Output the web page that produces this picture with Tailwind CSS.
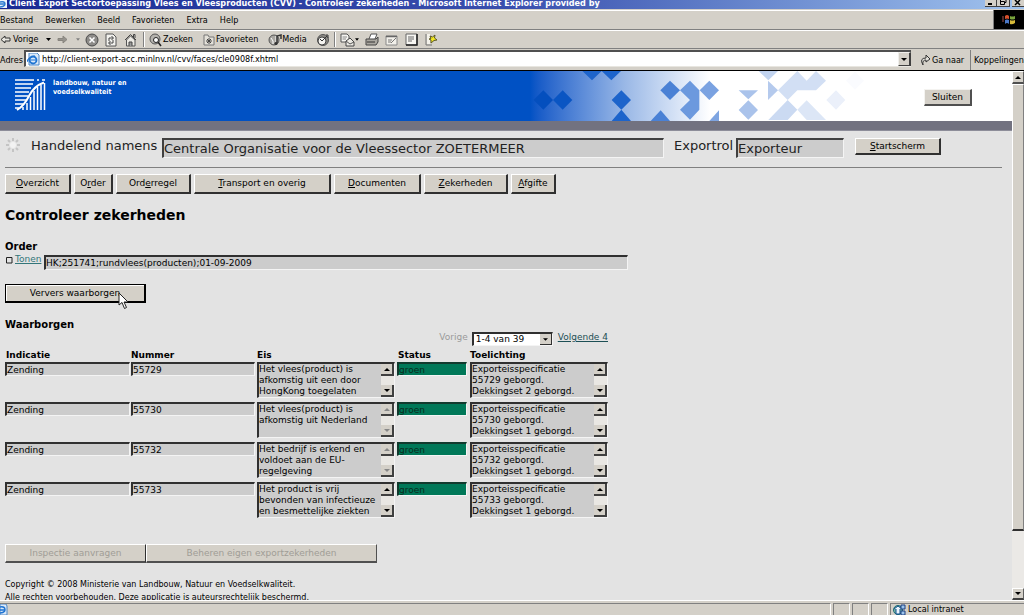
<!DOCTYPE html>
<html lang="nl">
<head>
<meta charset="utf-8">
<title>Client Export - Controleer zekerheden</title>
<script src="https://cdn.jsdelivr.net/npm/@tailwindcss/browser@4"></script>
</head>
<body class="h-screen flex flex-col overflow-hidden bg-[#d4d0c8] text-black text-[9px] leading-[11px] font-['DejaVu_Sans_Condensed','DejaVu_Sans',sans-serif]">

<!-- Title bar -->
<header class="flex-none h-[9px] flex items-end justify-between overflow-hidden bg-linear-to-r from-[#1a2a94] via-[#3a4fae] via-50% to-[#a2c4ee]">
  <div class="flex items-end gap-[2px] whitespace-nowrap text-white font-bold text-[9px] leading-[11px]">
    <svg class="w-[7px] h-[9px]" viewBox="0 0 7 9"><path d="M0 0H7V8H0Z" fill="#eef4fb"/><path d="M0 2Q5 1 5 4H0M0 7Q3 7 5 5" fill="none" stroke="#2c7bd0" stroke-width="1.4"/></svg>
    <span>Client Export Sectortoepassing Vlees en Vleesproducten (CVV) - Controleer zekerheden - Microsoft Internet Explorer provided by</span>
  </div>
  <div class="flex-none flex h-[7px] mb-[2px]">
    <button aria-label="Minimaliseren" class="w-[12px] h-[7px] bg-[#d4d0c8] border-r border-b border-[#404040]"><svg class="w-[11px] h-[6px]" viewBox="0 0 11 6"><path d="M3 4H7" stroke="#000" stroke-width="2"/></svg></button>
    <button aria-label="Herstellen" class="w-[13px] h-[7px] bg-[#d4d0c8] border-r border-b border-[#404040]"><svg class="w-[12px] h-[6px]" viewBox="0 0 12 6"><path d="M3.500 0V4.500H7.500V1.500H3.500M9 0V2.500H8" fill="none" stroke="#000"/></svg></button>
    <button aria-label="Sluiten" class="w-[12px] h-[7px] ml-[2px] bg-[#d4d0c8] border-b border-[#404040]"><svg class="w-[12px] h-[6px]" viewBox="0 0 12 6"><path d="M3 5L8 0M3 0L8 5" stroke="#000" stroke-width="1.500"/></svg></button>
  </div>
</header>

<!-- Menu bar -->
<div class="flex-none flex h-[21px] pt-px border-b border-[#808080]">
  <nav class="flex-1 flex items-center gap-[12px] border-t border-white">
    <button>Bestand</button><button>Bewerken</button><button>Beeld</button><button>Favorieten</button><button>Extra</button><button>Help</button>
  </nav>
  <div class="w-[31px] border-l border-[#808080] bg-black flex items-center justify-center">
    <svg class="w-[14px] h-[12px]" viewBox="0 0 14 12"><path d="M3 2Q5 0 7 2V5Q5 4 3 5Z" fill="#d8502c"/><path d="M8 2Q10 3 13 2V5Q10 6 8 5Z" fill="#79a53c"/><path d="M3 6Q5 5 7 6V10Q5 8 3 10Z" fill="#4b78c8"/><path d="M8 6Q10 7 13 6V9Q10 11 8 10Z" fill="#d8bb3a"/><path d="M0 3H2M0 5H2M0 7H2" stroke="#a05050"/></svg>
  </div>
</div>

<!-- Toolbar -->
<div class="flex-none flex items-center h-[19px] border-t border-white border-b border-b-[#808080]">
  <button class="flex items-center gap-[2px] w-[52px]"><svg class="w-[11px] h-[9px]" viewBox="0 0 11 9"><path d="M5 1L1 4.500L5 8V6H10V3H5Z" fill="#e8e6e0" stroke="#333"/></svg>Vorige<svg class="ml-[5px] w-[5px] h-[3px]" viewBox="0 0 5 3"><path d="M0 0H5L2.500 3Z"/></svg></button>
  <button aria-label="Volgende" class="flex items-center gap-[8px] ml-[5px]"><svg class="w-[11px] h-[9px]" viewBox="0 0 11 9"><path d="M6 1L10 4.500L6 8V5.500H1V3.500H6Z" fill="#96938d" stroke="#88857f"/></svg><svg class="w-[4px] h-[3px]" viewBox="0 0 5 3"><path d="M0 0H5L2.500 3Z" fill="#808080"/></svg></button>
  <button aria-label="Stoppen" class="ml-[5px]"><svg class="block w-[14px] h-[14px]" viewBox="0 0 14 14"><circle cx="7" cy="7" r="6" fill="#8d8b88" stroke="#4a4a4a"/><path d="M4.500 4.500L9.500 9.500M9.500 4.500L4.500 9.500" stroke="#fff" stroke-width="1.500"/></svg></button>
  <button aria-label="Vernieuwen" class="ml-[6px]"><svg class="block w-[12px] h-[14px]" viewBox="0 0 12 14"><path d="M1 1H8L11 4V13H1Z" fill="#f3f2ee" stroke="#555"/><path d="M4 8V5H8M6.500 3L8.500 5L6.500 7M8 7V10H4M5.500 8L3.500 10L5.500 12" fill="none" stroke="#444"/></svg></button>
  <button aria-label="Startpagina" class="ml-[7px]"><svg class="block w-[13px] h-[14px]" viewBox="0 0 13 14"><path d="M1 7L6.500 1.500L12 7M9.500 4V1.500H11V5" fill="none" stroke="#444"/><path d="M2.500 7V13H11V7L6.500 3Z" fill="#eceae4" stroke="#555"/><path d="M5 13V9H8V13" fill="#999" stroke="#444"/></svg></button>
  <span class="h-[15px] w-[2px] ml-[6px] border-l border-[#808080] bg-white"></span>
  <button class="flex items-center gap-px ml-[4px]"><svg class="w-[13px] h-[14px]" viewBox="0 0 13 14"><circle cx="6" cy="6" r="5" fill="#b5b3ae" stroke="#555"/><circle cx="7" cy="7" r="2.500" fill="#fff" stroke="#222"/><path d="M9 9L12 13" stroke="#222" stroke-width="1.500"/></svg>Zoeken</button>
  <button class="flex items-center gap-px ml-[10px]"><svg class="w-[12px] h-[12px]" viewBox="0 0 12 12"><path d="M1 3V1H5L6 3H11V11H1Z" fill="#e4e1d9" stroke="#777"/><path d="M6 4V10M3 7H9M4 5L8 9M8 5L4 9" stroke="#444"/></svg>Favorieten</button>
  <button class="flex items-center ml-[10px]"><svg class="w-[14px] h-[14px]" viewBox="0 0 14 14"><circle cx="6" cy="7" r="5" fill="#a9a7a2" stroke="#555"/><path d="M3 5Q6 8 5 11M8 3V9" stroke="#fff" fill="none"/><path d="M9 10V3L13 2V6" fill="none" stroke="#333" stroke-width="1.500"/><circle cx="8" cy="10.500" r="1.600" fill="#333"/></svg>Media</button>
  <button aria-label="Geschiedenis" class="ml-[9px]"><svg class="block w-[14px] h-[14px]" viewBox="0 0 14 14"><circle cx="7" cy="7" r="5.500" fill="#8b8984" stroke="#555"/><circle cx="6" cy="8" r="4" fill="#f4f3f0" stroke="#444"/><path d="M6 8L11 3M6 8L4 6M10 2H12V5" stroke="#333" fill="none"/></svg></button>
  <span class="h-[15px] w-[2px] ml-[4px] border-l border-[#808080] bg-white"></span>
  <button aria-label="E-mail" class="flex items-center ml-[4px]"><svg class="w-[15px] h-[14px]" viewBox="0 0 15 14"><path d="M1 1H7L9 3V9H1Z" fill="#f5f4f0" stroke="#555"/><path d="M2.500 4H7M2.500 6H6" stroke="#888"/><path d="M6 8L10 5L14 9V13H6Z" fill="#eceae4" stroke="#444"/><path d="M6 8L10 11L14 9" fill="none" stroke="#555"/></svg><svg class="w-[4px] h-[3px]" viewBox="0 0 5 3"><path d="M0 0H5L2.500 3Z"/></svg></button>
  <button aria-label="Afdrukken" class="ml-[6px]"><svg class="block w-[14px] h-[13px]" viewBox="0 0 14 13"><path d="M4 6L6 1H12L10 6" fill="#fff" stroke="#555"/><path d="M1 6H11L13 4V9L11 12H1Z" fill="#aaa7a0" stroke="#444"/><path d="M2 9H10" stroke="#333"/></svg></button>
  <button aria-label="Bewerken" class="ml-[6px]"><svg class="block w-[13px] h-[12px]" viewBox="0 0 13 12"><path d="M1 2H12V11H1Z" fill="#f2f0ea" stroke="#888"/><path d="M1 2.500H12" stroke="#666" stroke-width="1.500"/><path d="M3 6H7M3 8H6M6 9L11 4" stroke="#777"/></svg></button>
  <button aria-label="Discussie" class="ml-[7px]"><svg class="block w-[13px] h-[13px]" viewBox="0 0 13 13"><path d="M1 1H12V12H1Z" fill="#f7f6f2" stroke="#666"/><path d="M12 1V12H1" fill="none" stroke="#222" stroke-width="1.500"/><path d="M3 4H9M3 6H9M3 8H7" stroke="#666"/></svg></button>
  <button aria-label="Messenger" class="ml-[7px]"><svg class="block w-[12px] h-[13px]" viewBox="0 0 12 13"><path d="M1 1V12H7" fill="none" stroke="#777"/><path d="M2 1H5V11H2Z" fill="#f3f1ea"/><path d="M5 3L7.500 4L10 2L9.500 5L12 7L9 7.500L6 10V7L4 6L6 5.500Z" fill="#f4e91f" stroke="#5b5828"/></svg></button>
</div>

<!-- Address bar -->
<div class="flex-none flex items-stretch h-[22px] pt-px border-b border-black">
  <label for="adres" class="w-[24px] flex-none self-center">Adres</label>
  <div class="flex-1 flex items-center mb-[3px] border-t-2 border-l-2 border-[#505050] border-b border-b-[#e8e6e0] bg-white">
    <svg class="flex-none w-[13px] h-[13px] ml-px" viewBox="0 0 13 13"><path d="M2 0H10L12 2V12H2Z" fill="#dbe9f8" stroke="#4c86c6"/><circle cx="6" cy="7" r="3.500" fill="none" stroke="#1f74d2" stroke-width="1.800"/><path d="M3 7H9M0 9Q1 4 8 3" stroke="#1f74d2" fill="none" stroke-width="1.200"/></svg>
    <input id="adres" class="flex-1 min-w-0 ml-[2px] h-[14px] bg-transparent outline-none" value="http://client-export-acc.minlnv.nl/cvv/faces/cle0908f.xhtml">
    <button aria-label="Adressen tonen" class="flex-none w-[13px] self-stretch flex items-center justify-center bg-[#d4d0c8] border-t border-l border-[#f0efec] border-r-2 border-b border-r-[#404040] border-b-[#404040]"><svg class="w-[6px] h-[3px]" viewBox="0 0 6 3"><path d="M0 0H6L3 3Z"/></svg></button>
  </div>
  <button class="flex-none flex items-center gap-px w-[59px] pl-[9px]"><svg class="w-[11px] h-[12px]" viewBox="0 0 11 12"><path d="M3 11Q-1 4 6 4V1L10 5L6 8V6Q2 6 3 11Z" fill="#e2e0da" stroke="#333"/></svg>Ga naar</button>
  <button class="flex-none w-[54px] border-l border-[#808080] text-left pl-[3px]">Koppelingen</button>
</div>

<!-- Browser viewport -->
<div class="flex-1 min-h-0 flex">
  <main class="flex-1 min-w-0 overflow-hidden bg-[#e3e3e3] font-['DejaVu_Sans',sans-serif]">
    <!-- Ministry banner -->
    <div class="flex h-[50px] bg-linear-to-r from-[#0051c4] from-[530px] via-[#9ab8e6] via-[625px] to-white to-[710px]">
      <div class="flex-none w-[520px] flex gap-[7px] pl-[15px] pt-[8px] text-white">
        <svg class="w-[31px] h-[32px]" viewBox="0 0 31 32"><g stroke="#fff" stroke-width="1.500"><path d="M0 1H19M0 5H18M0 9H16M0 13H14M0 17H13M0 21H11M0 25H8M0 29H4M22 1H24M27 1H30"/><path d="M8 31V28M12 31V24M15.500 31V18M19 31V12M22.500 31V8M26 31V6M29.500 31V4"/></g><path d="M2 31Q9 27 14 17T29 3.500" fill="none" stroke="#fff" stroke-width="2"/></svg>
        <p class="font-bold text-[7px] leading-[9px] font-['DejaVu_Sans_Condensed','DejaVu_Sans',sans-serif]">landbouw, natuur en<br>voedselkwaliteit</p>
      </div>
      <svg class="flex-none w-[350px] h-[50px]" viewBox="0 18 1050 150">
        <path d="M70 76L99 105L70 134L41 105Z" fill="#044fbe"/>
        <path d="M128 76L157 105L128 134L99 105Z" fill="#0a55c3"/>
        <path d="M187 18H245L216 46ZM245 18H303L274 46ZM304 76L333 105L304 134L275 105ZM304 134L333 168H275Z" fill="#1d64cb"/>
        <path d="M450 47L480 76L450 105L421 76Z" fill="#4a81d5"/>
        <path d="M510 47L538 76V134L510 164L480 134L510 105L480 76Z" fill="#6c99de"/>
        <path d="M568 47L597 76L568 105L539 76Z" fill="#7aa2e1"/>
        <path d="M422 136L450 168H392Z" fill="#4a81d5"/>
        <path d="M597 136V168H568Z" fill="#7fa5e1"/>
        <path d="M656 76H714L685 103ZM685 106L714 135L685 164L656 135Z" fill="#aac3eb"/>
        <path d="M716 18H774L745 46Z" fill="#c2d4f0"/><path d="M744 47L774 76L744 105Z" fill="#b5caed"/>
        <path d="M774 76L832 18L860 47L888 18L918 47L888 76H832L803 105Z" fill="#d2dff4"/>
        <path d="M803 105L832 134L803 165H745Z" fill="#cbdaf2"/>
        <path d="M860 106L918 165H860L832 134Z" fill="#dce6f6"/>
        <path d="M948 76L976 105L948 134L919 105Z" fill="#ebf0fa"/>
        <path d="M1005 20L1032 47L1005 74L978 47Z" fill="#fafbfe"/>
      </svg>
      <div class="flex-1 flex items-center justify-end pr-[40px] pt-[3px]">
        <button class="w-[48px] h-[17px] bg-[#d4d0c8] border border-[#f4f3f0] border-r-2 border-b-2 border-r-[#505050] border-b-[#505050]">Sluiten</button>
      </div>
    </div>
    <div class="h-[10px] bg-[#727280] border-b border-[#8d8d99]"></div>

    <form class="pl-[5px]">
      <!-- Acting party -->
      <div class="flex items-start pt-[7px] h-[37px] mr-[10px] border-b border-[#808080] text-[13px] text-[#222]">
        <svg class="w-[14px] h-[14px] ml-px mr-[11px]" viewBox="0 0 14 14"><g stroke="#c4c4c4" stroke-width="2"><path d="M7 0V3M7 11V14M0 7H3M11 7H14M2 2L4 4M10 10L12 12M2 12L4 10M10 4L12 2"/></g><circle cx="7" cy="7" r="3" fill="#f2f2f2"/></svg>
        <label for="namens" class="w-[131px] leading-[15px]">Handelend namens</label>
        <input id="namens" readonly class="w-[502px] h-[20px] bg-[#cccccc] border border-[#f4f4f4] border-t-2 border-l-2 border-t-[#404040] border-l-[#404040]" value="Centrale Organisatie voor de Vleessector ZOETERMEER">
        <label for="rol" class="w-[62px] ml-[10px] leading-[15px]">Exportrol</label>
        <input id="rol" readonly class="w-[108px] h-[20px] bg-[#cccccc] border border-[#f4f4f4] border-t-2 border-l-2 border-t-[#404040] border-l-[#404040]" value="Exporteur">
        <button type="button" class="w-[86px] h-[17px] ml-[11px] text-[9px] text-black bg-[#d4d0c8] border border-white border-r-2 border-b-2 border-r-[#303030] border-b-[#303030]"><u>S</u>tartscherm</button>
      </div>

      <!-- Section buttons -->
      <div class="flex gap-[3px] mt-[6px] h-[20px]">
        <button type="button" class="w-[66px] bg-[#d4d0c8] border border-white border-r-2 border-b-2 border-r-[#303030] border-b-[#303030]"><u>O</u>verzicht</button>
        <button type="button" class="w-[39px] bg-[#d4d0c8] border border-white border-r-2 border-b-2 border-r-[#303030] border-b-[#303030]">O<u>r</u>der</button>
        <button type="button" class="w-[75px] bg-[#d4d0c8] border border-white border-r-2 border-b-2 border-r-[#303030] border-b-[#303030]">Ord<u>e</u>rregel</button>
        <button type="button" class="w-[137px] bg-[#d4d0c8] border border-white border-r-2 border-b-2 border-r-[#303030] border-b-[#303030]"><u>T</u>ransport en overig</button>
        <button type="button" class="w-[87px] bg-[#d4d0c8] border border-white border-r-2 border-b-2 border-r-[#303030] border-b-[#303030]"><u>D</u>ocumenten</button>
        <button type="button" class="w-[84px] bg-[#d4d0c8] border border-white border-r-2 border-b-2 border-r-[#303030] border-b-[#303030]"><u>Z</u>ekerheden</button>
        <button type="button" class="w-[45px] bg-[#d4d0c8] border border-white border-r-2 border-b-2 border-r-[#303030] border-b-[#303030]"><u>A</u>fgifte</button>
      </div>

      <h1 class="mt-[12px] text-[14px] leading-[18px] font-bold">Controleer zekerheden</h1>

      <h2 class="mt-[16px] text-[10px] leading-[14px] font-bold">Order</h2>
      <div class="flex items-start">
        <a href="#" class="w-[39px] flex items-center gap-[2px] text-[#33767a]"><svg class="w-[8px] h-[8px]" viewBox="0 0 8 8"><path d="M1.500 1.500H7V7H1.500Z" fill="none" stroke="#222"/></svg><span class="underline">Tonen</span></a>
        <input aria-label="Order" readonly class="w-[584px] h-[15px] mt-px bg-[#cccccc] border border-[#f4f4f4] border-t-2 border-l-2 border-t-[#303030] border-l-[#303030]" value="HK;251741;rundvlees(producten);01-09-2009">
      </div>

      <div class="relative w-[141px] mt-[14px]">
        <button type="button" class="w-full h-[19px] bg-[#d4d0c8] border border-black border-r-2 border-b-2 shadow-[inset_1px_1px_0_#fff]">Ververs waarborgen</button>
        <svg class="absolute left-[113px] top-[8px] w-[11px] h-[18px]" viewBox="0 0 11 18"><path d="M1 1V13L4 10.500L6.500 16.500L8.500 15.500L6 10H10Z" fill="#fff" stroke="#222"/></svg>
      </div>

      <h2 class="mt-[15px] text-[10px] leading-[14px] font-bold">Waarborgen</h2>
      <div class="flex items-start w-[603px] justify-end">
        <span class="text-[#9a9a9a] mr-[4px]">Vorige</span>
        <div class="relative w-[81px]">
          <select aria-label="Pagina" class="block appearance-none w-full h-[14px] pl-[2px] bg-white border border-[#f4f4f4] border-t-2 border-l-2 border-t-[#303030] border-l-[#303030]"><option>1-4 van 39</option></select>
          <span class="absolute right-px top-[2px] w-[12px] h-[11px] pointer-events-none flex items-center justify-center bg-[#d4d0c8] border-r border-b border-[#303030]"><svg class="w-[5px] h-[3px]" viewBox="0 0 6 3"><path d="M0 0H6L3 3Z"/></svg></span>
        </div>
        <a href="#" class="ml-[5px] underline text-[#1d4f55]">Volgende 4</a>
      </div>

      <table class="mt-[2px] w-[603px] table-fixed border-collapse text-left">
        <thead>
          <tr class="h-[14px]"><th class="w-[126px] pl-px">Indicatie</th><th class="w-[126px]">Nummer</th><th class="w-[140px]">Eis</th><th class="w-[73px] pl-px">Status</th><th class="w-[138px]">Toelichting</th></tr>
        </thead>
        <tbody class="align-top">
          <tr class="h-[40px]">
            <td class="pr-px"><input aria-label="Indicatie" readonly class="block w-full h-[14px] bg-[#cccccc] border border-[#f4f4f4] border-t-2 border-l-2 border-t-[#303030] border-l-[#303030]" value="Zending"></td>
            <td class="pr-[2px]"><input aria-label="Nummer" readonly class="block w-full h-[14px] bg-[#cccccc] border border-[#f4f4f4] border-t-2 border-l-2 border-t-[#303030] border-l-[#303030]" value="55729"></td>
            <td class="pr-[2px]"><div class="flex border border-[#f4f4f4] border-t-2 border-l-2 border-t-[#303030] border-l-[#303030] bg-[#cccccc]"><textarea aria-label="Eis" readonly class="block flex-1 min-w-0 h-[33px] resize-none overflow-hidden whitespace-pre">Het vlees(product) is
afkomstig uit een door
HongKong toegelaten</textarea>
              <div class="w-[13px] flex flex-col justify-between bg-[#e9e7e3]"><button type="button" aria-label="Omhoog" class="h-[12px] flex items-center justify-center bg-[#d4d0c8] border-r-2 border-b-2 border-[#404040]"><svg class="w-[6px] h-[3px]" viewBox="0 0 6 3"><path d="M0 3H6L3 0Z"/></svg></button><button type="button" aria-label="Omlaag" class="h-[12px] flex items-center justify-center bg-[#d4d0c8] border-r-2 border-b-2 border-[#404040]"><svg class="w-[6px] h-[3px]" viewBox="0 0 6 3"><path d="M0 0H6L3 3Z"/></svg></button></div></div></td>
            <td class="pr-[3px]"><input aria-label="Status" readonly class="block w-full h-[14px] bg-[#007858] text-[#0a2a1c] border border-[#f4f4f4] border-t-2 border-l-2 border-t-[#123a2e] border-l-[#123a2e]" value="groen"></td>
            <td><div class="flex border border-[#f4f4f4] border-t-2 border-l-2 border-t-[#303030] border-l-[#303030] bg-[#cccccc]"><textarea aria-label="Toelichting" readonly class="block flex-1 min-w-0 h-[33px] resize-none overflow-hidden whitespace-pre">Exporteisspecificatie
55729 geborgd.
Dekkingset 2 geborgd.</textarea>
              <div class="w-[13px] flex flex-col justify-between bg-[#e9e7e3]"><button type="button" aria-label="Omhoog" class="h-[12px] flex items-center justify-center bg-[#d4d0c8] border-r-2 border-b-2 border-[#404040]"><svg class="w-[6px] h-[3px]" viewBox="0 0 6 3"><path d="M0 3H6L3 0Z"/></svg></button><button type="button" aria-label="Omlaag" class="h-[12px] flex items-center justify-center bg-[#d4d0c8] border-r-2 border-b-2 border-[#404040]"><svg class="w-[6px] h-[3px]" viewBox="0 0 6 3"><path d="M0 0H6L3 3Z"/></svg></button></div></div></td>
          </tr>
          <tr class="h-[40px]">
            <td class="pr-px"><input aria-label="Indicatie" readonly class="block w-full h-[14px] bg-[#cccccc] border border-[#f4f4f4] border-t-2 border-l-2 border-t-[#303030] border-l-[#303030]" value="Zending"></td>
            <td class="pr-[2px]"><input aria-label="Nummer" readonly class="block w-full h-[14px] bg-[#cccccc] border border-[#f4f4f4] border-t-2 border-l-2 border-t-[#303030] border-l-[#303030]" value="55730"></td>
            <td class="pr-[2px]"><div class="flex border border-[#f4f4f4] border-t-2 border-l-2 border-t-[#303030] border-l-[#303030] bg-[#cccccc]"><textarea aria-label="Eis" readonly class="block flex-1 min-w-0 h-[33px] resize-none overflow-hidden whitespace-pre">Het vlees(product) is
afkomstig uit Nederland</textarea>
              <div class="w-[13px] flex flex-col justify-between bg-[#e9e7e3]"><button type="button" disabled aria-label="Omhoog" class="h-[12px] flex items-center justify-center bg-[#d4d0c8] border-r-2 border-b-2 border-[#404040]"><svg class="w-[6px] h-[3px]" viewBox="0 0 6 3"><path d="M0 3H6L3 0Z" fill="#888"/></svg></button><button type="button" disabled aria-label="Omlaag" class="h-[12px] flex items-center justify-center bg-[#d4d0c8] border-r-2 border-b-2 border-[#404040]"><svg class="w-[6px] h-[3px]" viewBox="0 0 6 3"><path d="M0 0H6L3 3Z" fill="#888"/></svg></button></div></div></td>
            <td class="pr-[3px]"><input aria-label="Status" readonly class="block w-full h-[14px] bg-[#007858] text-[#0a2a1c] border border-[#f4f4f4] border-t-2 border-l-2 border-t-[#123a2e] border-l-[#123a2e]" value="groen"></td>
            <td><div class="flex border border-[#f4f4f4] border-t-2 border-l-2 border-t-[#303030] border-l-[#303030] bg-[#cccccc]"><textarea aria-label="Toelichting" readonly class="block flex-1 min-w-0 h-[33px] resize-none overflow-hidden whitespace-pre">Exporteisspecificatie
55730 geborgd.
Dekkingset 1 geborgd.</textarea>
              <div class="w-[13px] flex flex-col justify-between bg-[#e9e7e3]"><button type="button" aria-label="Omhoog" class="h-[12px] flex items-center justify-center bg-[#d4d0c8] border-r-2 border-b-2 border-[#404040]"><svg class="w-[6px] h-[3px]" viewBox="0 0 6 3"><path d="M0 3H6L3 0Z"/></svg></button><button type="button" aria-label="Omlaag" class="h-[12px] flex items-center justify-center bg-[#d4d0c8] border-r-2 border-b-2 border-[#404040]"><svg class="w-[6px] h-[3px]" viewBox="0 0 6 3"><path d="M0 0H6L3 3Z"/></svg></button></div></div></td>
          </tr>
          <tr class="h-[40px]">
            <td class="pr-px"><input aria-label="Indicatie" readonly class="block w-full h-[14px] bg-[#cccccc] border border-[#f4f4f4] border-t-2 border-l-2 border-t-[#303030] border-l-[#303030]" value="Zending"></td>
            <td class="pr-[2px]"><input aria-label="Nummer" readonly class="block w-full h-[14px] bg-[#cccccc] border border-[#f4f4f4] border-t-2 border-l-2 border-t-[#303030] border-l-[#303030]" value="55732"></td>
            <td class="pr-[2px]"><div class="flex border border-[#f4f4f4] border-t-2 border-l-2 border-t-[#303030] border-l-[#303030] bg-[#cccccc]"><textarea aria-label="Eis" readonly class="block flex-1 min-w-0 h-[33px] resize-none overflow-hidden whitespace-pre">Het bedrijf is erkend en
voldoet aan de EU-
regelgeving</textarea>
              <div class="w-[13px] flex flex-col justify-between bg-[#e9e7e3]"><button type="button" disabled aria-label="Omhoog" class="h-[12px] flex items-center justify-center bg-[#d4d0c8] border-r-2 border-b-2 border-[#404040]"><svg class="w-[6px] h-[3px]" viewBox="0 0 6 3"><path d="M0 3H6L3 0Z" fill="#888"/></svg></button><button type="button" disabled aria-label="Omlaag" class="h-[12px] flex items-center justify-center bg-[#d4d0c8] border-r-2 border-b-2 border-[#404040]"><svg class="w-[6px] h-[3px]" viewBox="0 0 6 3"><path d="M0 0H6L3 3Z" fill="#888"/></svg></button></div></div></td>
            <td class="pr-[3px]"><input aria-label="Status" readonly class="block w-full h-[14px] bg-[#007858] text-[#0a2a1c] border border-[#f4f4f4] border-t-2 border-l-2 border-t-[#123a2e] border-l-[#123a2e]" value="groen"></td>
            <td><div class="flex border border-[#f4f4f4] border-t-2 border-l-2 border-t-[#303030] border-l-[#303030] bg-[#cccccc]"><textarea aria-label="Toelichting" readonly class="block flex-1 min-w-0 h-[33px] resize-none overflow-hidden whitespace-pre">Exporteisspecificatie
55732 geborgd.
Dekkingset 1 geborgd.</textarea>
              <div class="w-[13px] flex flex-col justify-between bg-[#e9e7e3]"><button type="button" aria-label="Omhoog" class="h-[12px] flex items-center justify-center bg-[#d4d0c8] border-r-2 border-b-2 border-[#404040]"><svg class="w-[6px] h-[3px]" viewBox="0 0 6 3"><path d="M0 3H6L3 0Z"/></svg></button><button type="button" aria-label="Omlaag" class="h-[12px] flex items-center justify-center bg-[#d4d0c8] border-r-2 border-b-2 border-[#404040]"><svg class="w-[6px] h-[3px]" viewBox="0 0 6 3"><path d="M0 0H6L3 3Z"/></svg></button></div></div></td>
          </tr>
          <tr class="h-[40px]">
            <td class="pr-px"><input aria-label="Indicatie" readonly class="block w-full h-[14px] bg-[#cccccc] border border-[#f4f4f4] border-t-2 border-l-2 border-t-[#303030] border-l-[#303030]" value="Zending"></td>
            <td class="pr-[2px]"><input aria-label="Nummer" readonly class="block w-full h-[14px] bg-[#cccccc] border border-[#f4f4f4] border-t-2 border-l-2 border-t-[#303030] border-l-[#303030]" value="55733"></td>
            <td class="pr-[2px]"><div class="flex border border-[#f4f4f4] border-t-2 border-l-2 border-t-[#303030] border-l-[#303030] bg-[#cccccc]"><textarea aria-label="Eis" readonly class="block flex-1 min-w-0 h-[33px] resize-none overflow-hidden whitespace-pre">Het product is vrij
bevonden van infectieuze
en besmettelijke ziekten</textarea>
              <div class="w-[13px] flex flex-col justify-between bg-[#e9e7e3]"><button type="button" aria-label="Omhoog" class="h-[12px] flex items-center justify-center bg-[#d4d0c8] border-r-2 border-b-2 border-[#404040]"><svg class="w-[6px] h-[3px]" viewBox="0 0 6 3"><path d="M0 3H6L3 0Z"/></svg></button><button type="button" aria-label="Omlaag" class="h-[12px] flex items-center justify-center bg-[#d4d0c8] border-r-2 border-b-2 border-[#404040]"><svg class="w-[6px] h-[3px]" viewBox="0 0 6 3"><path d="M0 0H6L3 3Z"/></svg></button></div></div></td>
            <td class="pr-[3px]"><input aria-label="Status" readonly class="block w-full h-[14px] bg-[#007858] text-[#0a2a1c] border border-[#f4f4f4] border-t-2 border-l-2 border-t-[#123a2e] border-l-[#123a2e]" value="groen"></td>
            <td><div class="flex border border-[#f4f4f4] border-t-2 border-l-2 border-t-[#303030] border-l-[#303030] bg-[#cccccc]"><textarea aria-label="Toelichting" readonly class="block flex-1 min-w-0 h-[33px] resize-none overflow-hidden whitespace-pre">Exporteisspecificatie
55733 geborgd.
Dekkingset 1 geborgd.</textarea>
              <div class="w-[13px] flex flex-col justify-between bg-[#e9e7e3]"><button type="button" aria-label="Omhoog" class="h-[12px] flex items-center justify-center bg-[#d4d0c8] border-r-2 border-b-2 border-[#404040]"><svg class="w-[6px] h-[3px]" viewBox="0 0 6 3"><path d="M0 3H6L3 0Z"/></svg></button><button type="button" aria-label="Omlaag" class="h-[12px] flex items-center justify-center bg-[#d4d0c8] border-r-2 border-b-2 border-[#404040]"><svg class="w-[6px] h-[3px]" viewBox="0 0 6 3"><path d="M0 0H6L3 3Z"/></svg></button></div></div></td>
          </tr>
        </tbody>
      </table>

      <div class="flex mt-[22px] h-[19px] text-[#a09d96]">
        <button type="button" disabled class="w-[141px] bg-[#d4d0c8] border border-white border-b-2 border-r-[#303030] border-b-[#505050]">Inspectie aanvragen</button>
        <button type="button" disabled class="w-[231px] bg-[#d4d0c8] border border-white border-b-2 border-r-[#505050] border-b-[#505050]">Beheren eigen exportzekerheden</button>
      </div>
      <footer class="mt-[15px] text-[8px] leading-[13px]">Copyright © 2008 Ministerie van Landbouw, Natuur en Voedselkwaliteit.<br>Alle rechten voorbehouden. Deze applicatie is auteursrechtelijk beschermd.</footer>
    </form>
  </main>

  <!-- Vertical scroll bar -->
  <div class="flex-none w-[12px] flex flex-col bg-[#ebe9e6]">
    <button aria-label="Omhoog schuiven" class="h-[13px] flex items-center justify-center bg-[#d4d0c8] border-t border-l border-white border-r border-b-2 border-r-[#606060] border-b-[#505050]"><svg class="w-[6px] h-[3px]" viewBox="0 0 6 3"><path d="M0 3H6L3 0Z"/></svg></button>
    <div class="basis-0 grow-[447] bg-[#d4d0c8] border-l border-t border-white border-r border-b-2 border-r-[#808080] border-b-[#303030]"></div>
    <div class="basis-0 grow-[57]"></div>
    <button aria-label="Omlaag schuiven" class="h-[12px] flex items-center justify-center bg-[#d4d0c8] border-t border-l border-white border-r border-b-2 border-r-[#606060] border-b-[#404040]"><svg class="w-[6px] h-[3px]" viewBox="0 0 6 3"><path d="M0 0H6L3 3Z"/></svg></button>
  </div>
</div>

<!-- Status bar -->
<footer class="flex-none h-[15px] pt-[2px] flex gap-[2px] border-t border-white">
  <div class="flex-1 border-t border-r border-t-[#808080] border-r-white"><svg class="w-[8px] h-[12px]" viewBox="0 0 8 12"><path d="M0 0H6L7 2V11H0Z" fill="#dbe9f8" stroke="#4c86c6"/><path d="M0 3Q5 2 5 6H0M0 9Q3 9 5 7" fill="none" stroke="#1f74d2" stroke-width="1.500"/></svg></div>
  <div class="w-[17px] border border-b-0 border-[#808080] border-r-white"></div>
  <div class="w-[17px] border border-b-0 border-[#808080] border-r-white"></div>
  <div class="w-[17px] border border-b-0 border-[#808080] border-r-white"></div>
  <div class="w-[134px] flex items-center gap-[2px] pl-[2px] border border-b-0 border-r-0 border-[#808080]"><svg class="w-[13px] h-[12px]" viewBox="0 0 13 12"><circle cx="5" cy="6" r="4.500" fill="#7fb8a8" stroke="#1b6b76"/><path d="M1 5L5 2L9 5M3 5V10H7V5" stroke="#0d4d8c" fill="#eaf4fb"/><path d="M8 1H12V5H8ZM8 7H12V11H8Z" fill="#9cc4ea" stroke="#1d3f80"/></svg>Local intranet</div>
</footer>
</body>
</html>
